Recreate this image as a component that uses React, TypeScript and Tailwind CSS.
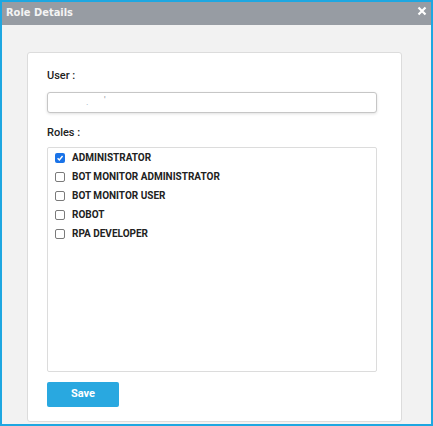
import React from "react";

const roles = [
  { name: "ADMINISTRATOR", checked: true },
  { name: "BOT MONITOR ADMINISTRATOR", checked: false },
  { name: "BOT MONITOR USER", checked: false },
  { name: "ROBOT", checked: false },
  { name: "RPA DEVELOPER", checked: false },
];

function Box({ checked }: { checked: boolean }) {
  if (checked) {
    return (
      <span className="w-[10px] h-[10px] rounded-[2px] bg-[#1a73e8] flex items-center justify-center shrink-0">
        <svg width="8" height="8" viewBox="0 0 10 10">
          <path d="M2 5.2 L4.2 7.4 L8.2 2.6" fill="none" stroke="#fff" strokeWidth="1.8" />
        </svg>
      </span>
    );
  }
  return <span className="w-[10px] h-[10px] rounded-[2px] border border-[#7a7a7a] bg-white shrink-0" />;
}

export default function App() {
  return (
    <div
      className="w-[433px] h-[426px] border-2 border-[#1ea7e1] bg-[#f2f2f2] flex flex-col"
      style={{ fontFamily: "Roboto, 'Liberation Sans', sans-serif" }}
    >
      <div className="h-[23px] shrink-0 bg-[#979ca3] flex items-center justify-between pl-[4px] pr-[4px]">
        <span
          className="text-[11px] font-bold text-[#f4f4f4]"
          style={{ fontFamily: "'DejaVu Sans Condensed', 'DejaVu Sans', Verdana, sans-serif" }}
        >
          Role Details
        </span>
        <svg width="10" height="10" viewBox="0 0 10 10" className="mb-[6px]">
          <path d="M1.5 1.5 L8.5 8.5 M8.5 1.5 L1.5 8.5" stroke="#fff" strokeWidth="2.2" />
        </svg>
      </div>
      <div className="flex-1 pl-[25px] pr-[29px] pt-[27px] pb-[2px] flex">
        <div className="flex-1 bg-white border border-[#dcdcdc] rounded-[3px] pl-[19px] pr-[24px] pt-[16px] pb-[14px] flex flex-col">
          <div className="text-[11px] leading-[14px] font-medium text-[#222]">User :</div>
          <div className="mt-[9px] h-[21px] border border-[#c6c6c6] rounded-[3px] shadow-[0_1px_3px_rgba(0,0,0,0.12)] bg-white relative">
            <span className="absolute left-[38px] top-[4px] text-[9px] leading-[10px] text-[#9ab]">.</span>
            <span className="absolute left-[56px] top-[2px] text-[9px] leading-[10px] text-[#889]">'</span>
          </div>
          <div className="mt-[13px] text-[11px] leading-[14px] font-medium text-[#222]">Roles :</div>
          <div className="mt-[7px] h-[225px] border border-[#dcdcdc] rounded-[2px] bg-white flex flex-col">
            {roles.map((r) => (
              <div key={r.name} className="h-[19px] flex items-center pl-[7px] gap-[7px]">
                <Box checked={r.checked} />
                <span className="text-[10px] font-bold text-[#222]">{r.name}</span>
              </div>
            ))}
          </div>
          <button className="mt-[10px] w-[72px] h-[25px] bg-[#29a8e0] rounded-[2px] text-white text-[11px] font-bold">
            Save
          </button>
        </div>
      </div>
    </div>
  );
}
